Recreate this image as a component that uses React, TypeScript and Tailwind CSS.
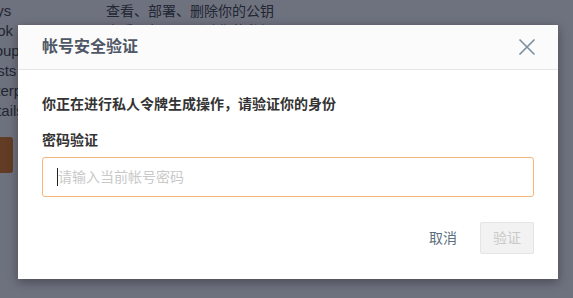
import React, { useState } from 'react';

const font = { fontFamily: '"Liberation Sans", "Noto Sans CJK SC", sans-serif' };

const BackgroundPage: React.FC = () => (
  <div className="flex h-full bg-white text-[14px] text-[#333]">
    <div className="w-[60px] shrink-0 flex flex-col -ml-[22px] pt-[1px] leading-[20px] text-[15px] text-[#444]">
      <span>Keys</span>
      <span>Hook</span>
      <span>Group</span>
      <span>Hosts</span>
      <span>Enterprise</span>
      <span>Details</span>
      <div className="mt-[16px] ml-[8px] h-[36px] w-[27px] rounded-[3px] bg-[#e07a1f]" />
    </div>
    <div className="pl-[68px] pt-[1px] leading-[20px] text-[#444]">
      <div>查看、部署、删除你的公钥</div>
      <div>查看、部署、删除你的私钥</div>
    </div>
  </div>
);

const VerifyDialog: React.FC = () => {
  const [password, setPassword] = useState('');

  return (
    <div className="absolute left-[18px] top-[25px] w-[540px] h-[254px] bg-white shadow-[0_3px_10px_rgba(0,0,0,0.35)] flex flex-col">
      <div className="h-[45px] shrink-0 flex items-center justify-between pl-[24px] pr-[22px] bg-[#fbfbfb] border-b border-[#e6e6e6]">
        <span className="text-[16px] font-bold text-[#4f5766]">帐号安全验证</span>
        <button className="text-[#7b8e9d]" aria-label="close">
          <svg width="18" height="18" viewBox="0 0 18 18" fill="none" stroke="currentColor" strokeWidth="1.6">
            <path d="M1.5 1.5 L16.5 16.5 M16.5 1.5 L1.5 16.5" />
          </svg>
        </button>
      </div>

      <div className="flex flex-col px-[24px] pt-[24px]">
        <p className="text-[14px] font-bold leading-[20px] text-[#333]">你正在进行私人令牌生成操作，请验证你的身份</p>
        <label className="mt-[16px] text-[14px] font-bold leading-[20px] text-[#333]">密码验证</label>
        <div className="mt-[7px] h-[40px] rounded-[3px] border border-[#f8b57a] flex items-center pl-[14px]">
          <span className="w-[1px] h-[18px] bg-[#222]" />
          <input
            type="password"
            value={password}
            onChange={(e) => setPassword(e.target.value)}
            placeholder="请输入当前帐号密码"
            className="flex-1 bg-transparent outline-none text-[14px] text-[#333] placeholder:text-[#c9c9c9]"
            style={font}
          />
        </div>
      </div>

      <div className="flex items-center justify-end gap-[23px] pr-[24px] mt-[25px]">
        <button className="text-[14px] text-[#5b6f80]">取消</button>
        <button className="h-[32px] w-[54px] rounded-[2px] border border-[#e4e4e4] bg-[#f2f2f2] text-[14px] text-[#c9c9c9]">
          验证
        </button>
      </div>
    </div>
  );
};

const App: React.FC = () => (
  <div className="relative w-[573px] h-[298px] overflow-hidden" style={font}>
    <BackgroundPage />
    <div className="absolute inset-0 bg-[#0d1328]/60" />
    <VerifyDialog />
  </div>
);

export default App;
